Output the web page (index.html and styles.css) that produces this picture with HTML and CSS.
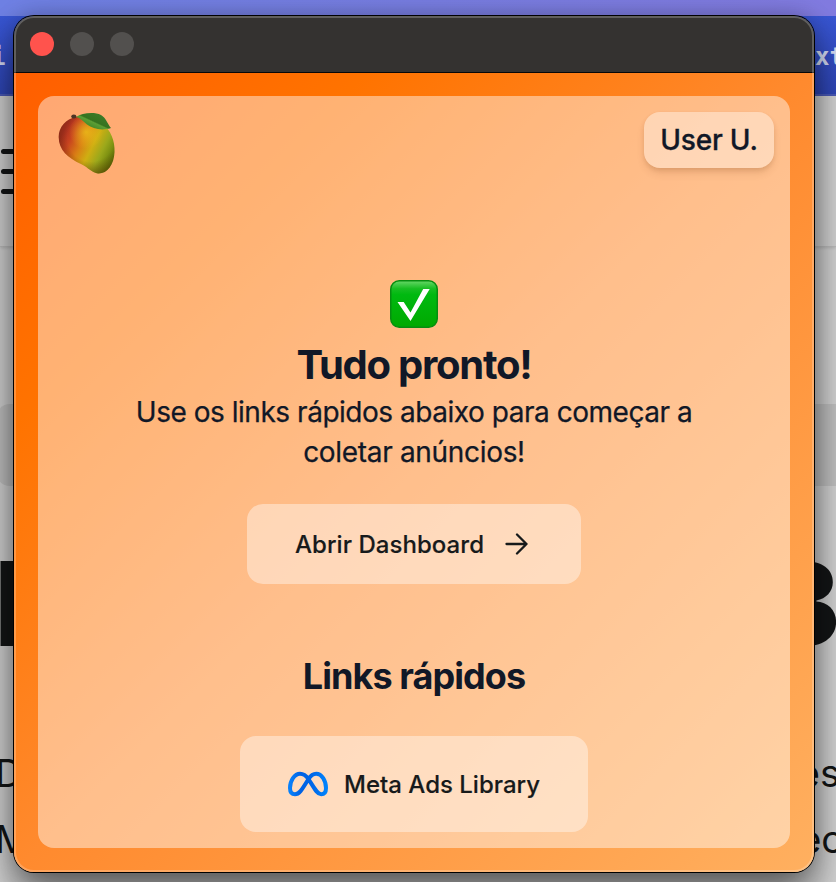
FILE: index.html
```html
<!DOCTYPE html>
<html lang="pt-BR">
<head>
<meta charset="utf-8">
<title>Mango</title>
<link rel="stylesheet" href="styles.css">
</head>
<body>
<div class="page">
  <div class="browser-strip"></div>
  <div class="banner"><span class="banner-left">i</span><span>xt</span></div>
  <div class="page-header"><div class="menu"><i></i><i></i><i></i></div></div>
  <div class="page-band"></div>
  <div class="page-title"><span class="title-left">I</span><span class="title-right">B</span></div>
  <div class="page-copy">
    <div class="copy-line"><span class="copy-left">D</span><span class="copy-right">es</span></div>
    <div class="copy-line"><span class="copy-left">M</span><span class="copy-right copy-second">ec</span></div>
  </div>
</div>

<div class="window">
  <div class="titlebar"><span class="dot close"></span><span class="dot"></span><span class="dot"></span></div>
  <div class="content">
    <main class="panel">
      <header class="top">
        <svg class="mango" viewBox="0 0 64 64">
          <defs>
            <linearGradient id="skin" x1="4" y1="22" x2="55" y2="48" gradientUnits="userSpaceOnUse">
              <stop offset="0" stop-color="#a92d20"/><stop offset=".17" stop-color="#c8431f"/><stop offset=".38" stop-color="#d97f14"/><stop offset=".57" stop-color="#cfae12"/><stop offset=".76" stop-color="#9ba81b"/><stop offset="1" stop-color="#5f7a08"/>
            </linearGradient>
            <radialGradient id="shine" cx="28" cy="20" r="17" gradientUnits="userSpaceOnUse">
              <stop offset="0" stop-color="#f0cf1a" stop-opacity=".65"/><stop offset="1" stop-color="#f5c51a" stop-opacity="0"/>
            </radialGradient>
            <radialGradient id="shade" cx="33" cy="26" r="39" gradientUnits="userSpaceOnUse">
              <stop offset=".6" stop-color="#502800" stop-opacity="0"/><stop offset="1" stop-color="#502800" stop-opacity=".55"/>
            </radialGradient>
            <linearGradient id="leaf" x1="38" y1="1" x2="31" y2="16" gradientUnits="userSpaceOnUse">
              <stop offset="0" stop-color="#3b7a28"/><stop offset=".5" stop-color="#35731f"/><stop offset=".58" stop-color="#5c9e35"/><stop offset="1" stop-color="#3d8526"/>
            </linearGradient>
            <path id="fruit" d="M18 5C8 7 .7 15 .7 25C.7 38 10 46 23 52C31 56 34 61 40 61.500C49 62 56 53 56.500 40C57 29 53 18 44 12C36 6 27 3 18 5Z"/>
          </defs>
          <use href="#fruit" fill="url(#skin)"/>
          <use href="#fruit" fill="url(#shine)"/>
          <use href="#fruit" fill="url(#shade)"/>
          <path d="M18 5C24 1 36 -.5 43 3C48 6 49 11 53 16C44 19 35 17 29 12.500C25 9 22 6 18 5Z" fill="url(#leaf)"/>
          <ellipse cx="15.800" cy="4.500" rx="2.600" ry="1.900" fill="#4c3426"/>
        </svg>
        <div class="user">User U.</div>
      </header>
      <section class="ready">
        <svg class="check" viewBox="0 0 48 48">
          <defs>
            <linearGradient id="green" x1="0" y1="0" x2="0" y2="1"><stop offset="0" stop-color="#68d768"/><stop offset=".17" stop-color="#18bd22"/><stop offset=".3" stop-color="#00b910"/><stop offset="1" stop-color="#00a900"/></linearGradient>
          </defs>
          <rect x=".75" y=".75" width="46.500" height="46.500" rx="8.500" fill="url(#green)" stroke="#078d10" stroke-width="1.500"/>
          <path d="M7.500 22H13.700L20.500 32.500L33.200 9H39.700L20.500 41Z" fill="#fff"/>
        </svg>
        <h1>Tudo pronto!</h1>
        <p><span class="intro-first">Use os links rápidos abaixo para começar a</span><br><span class="intro-second">coletar anúncios!</span></p>
        <a class="button dash"><span>Abrir Dashboard</span>
          <svg class="arrow" viewBox="0 0 24 24"><path d="M1.500 12H21.500M12 2.500L21.500 12L12 21.500"/></svg>
        </a>
      </section>
      <section class="quick">
        <h2>Links rápidos</h2>
        <a class="button meta">
          <svg class="logo" viewBox="0 0 40 26">
            <defs>
              <linearGradient id="blue" x1="0" x2="1"><stop offset="0" stop-color="#0880fa"/><stop offset=".3" stop-color="#0062e4"/><stop offset=".62" stop-color="#0067e8"/><stop offset="1" stop-color="#0082fb"/></linearGradient>
            </defs>
            <path d="M20.500 8C17.800 4.200 15.200 2.800 12 2.800C6.500 2.800 2 9.800 2 17C2 21 3.900 23.300 7 23.300C11 23.300 13.200 20 20.500 8C22.900 4.200 25.500 2.800 28.300 2.800C33.700 2.800 38 9.500 38 17C38 21 36.300 23.300 33.200 23.300C29.300 23.300 26.700 18 20.500 8Z" fill="none" stroke="url(#blue)" stroke-width="4" stroke-linejoin="round"/>
          </svg>
          <span>Meta Ads Library</span>
        </a>
      </section>
    </main>
  </div>
</div>
</body>
</html>
```
FILE: styles.css
```css
* { box-sizing: border-box; }
body { margin: 0; width: 836px; height: 882px; overflow: hidden; position: relative; font-family: Inter, sans-serif; color: #111827; }
.page { height: 882px; background: #d8d8d8; overflow: hidden; color: #141617; }
.browser-strip { height: 16px; background: linear-gradient(90deg, #6f81e4, #827be0); }
.banner { height: 80px; background: linear-gradient(#3855d2, #3048bc); border-bottom: 2px solid #4e5ec0; display: flex; justify-content: space-between; align-items: center; color: #d5dcf5; font: bold 24px "DejaVu Sans Mono", monospace; overflow: hidden; }
.banner-left { margin-left: -9px; padding-top: 4px; }
.banner span:last-child { width: 21px; white-space: nowrap; padding-top: 4px; }
.page-header { height: 151px; border-bottom: 1px solid #c2c2c2; box-shadow: 0 1px 3px #0002; padding-top: 53px; }
.menu { display: grid; gap: 15px; width: 40px; margin-left: 1px; }
.menu i { height: 5px; border-radius: 3px; background: #141617; }
.page-band { height: 82px; margin-top: 157px; margin-left: -4px; background: #c6c6c6; border-radius: 14px 0 0 14px; }
.page-title { height: 188px; padding-top: 56px; display: flex; justify-content: space-between; font-weight: 900; font-size: 117px; line-height: 124px; }
.title-left { margin-left: -5px; }
.title-right { width: 60px; margin-right: -3px; }
.title-right, .copy-right { display: flex; justify-content: flex-end; }
.page-copy { padding-top: 66px; font-size: 38px; line-height: 66px; }
.copy-line { display: flex; justify-content: space-between; height: 66px; }
.copy-left { margin-left: -5px; }
.copy-right { margin-right: -4px; }
.copy-second { margin-right: -7px; }

.window { position: absolute; left: 14px; top: 16px; width: 800px; height: 856px; border-radius: 20px; overflow: hidden; box-shadow: 0 0 0 1px #000, 0 0 22px rgba(0,0,0,.25), 0 28px 44px 2px rgba(0,0,0,.5); }
.window::after { content: ""; position: absolute; inset: 0; border-radius: 20px; box-shadow: inset 0 0 0 2px rgba(255,255,255,.22); }
.titlebar { height: 57px; background: #343230; border-bottom: 1px solid #080808; display: flex; gap: 16px; padding: 16px; }
.dot { width: 24px; height: 24px; border-radius: 50%; background: #52504e; }
.close { background: #ff534d; }
.content { height: 799px; padding: 23px 24px 24px; background: linear-gradient(135deg, #ff5e00 0%, #ff7300 22%, #ff8a2e 50%, #ffb060 100%); }
.panel { height: 752px; border-radius: 16px; background: rgba(255,255,255,.45); display: flex; flex-direction: column; align-items: center; padding: 16px; }
.top { width: 100%; height: 168px; display: flex; justify-content: space-between; align-items: flex-start; }
.mango { width: 64px; height: 64px; margin-left: 4px; }
.user { width: 130px; height: 56px; border-radius: 16px; background: rgba(255,255,255,.38); box-shadow: 0 6px 10px -2px rgba(100,45,0,.16), 0 2px 4px rgba(100,45,0,.1); font-size: 28px; line-height: 57px; font-weight: 500; text-align: center; white-space: nowrap; letter-spacing: -.2px; -webkit-text-stroke: .3px; }
.ready, .quick { display: flex; flex-direction: column; align-items: center; white-space: nowrap; }
.check { width: 48px; height: 48px; }
h1, h2, p { margin: 0; text-align: center; }
h1 { margin-top: 12px; height: 52px; line-height: 50px; font-size: 40px; font-weight: 700; letter-spacing: -1.25px; }
p { font-size: 28px; line-height: 41px; height: 80px; -webkit-text-stroke: .25px; }
.intro-first { letter-spacing: -.47px; }
.intro-second { letter-spacing: -.32px; position: relative; top: -1px; }
.button { display: flex; align-items: center; justify-content: center; border-radius: 16px; background: rgba(255,255,255,.4); color: #171a1b; font-size: 24px; font-weight: 500; -webkit-text-stroke: .15px; }
.dash { width: 334px; height: 80px; margin-top: 32px; gap: 21px; padding-right: 4px; letter-spacing: .05px; }
.arrow { width: 24px; height: 24px; fill: none; stroke: #171a1b; stroke-width: 2.3; stroke-linecap: round; stroke-linejoin: round; }
h2 { margin-top: 72px; height: 80px; line-height: 40px; font-size: 36px; font-weight: 700; letter-spacing: -.93px; }
.meta { width: 348px; height: 96px; gap: 16px; }
.logo { width: 40px; height: 26px; }
```
